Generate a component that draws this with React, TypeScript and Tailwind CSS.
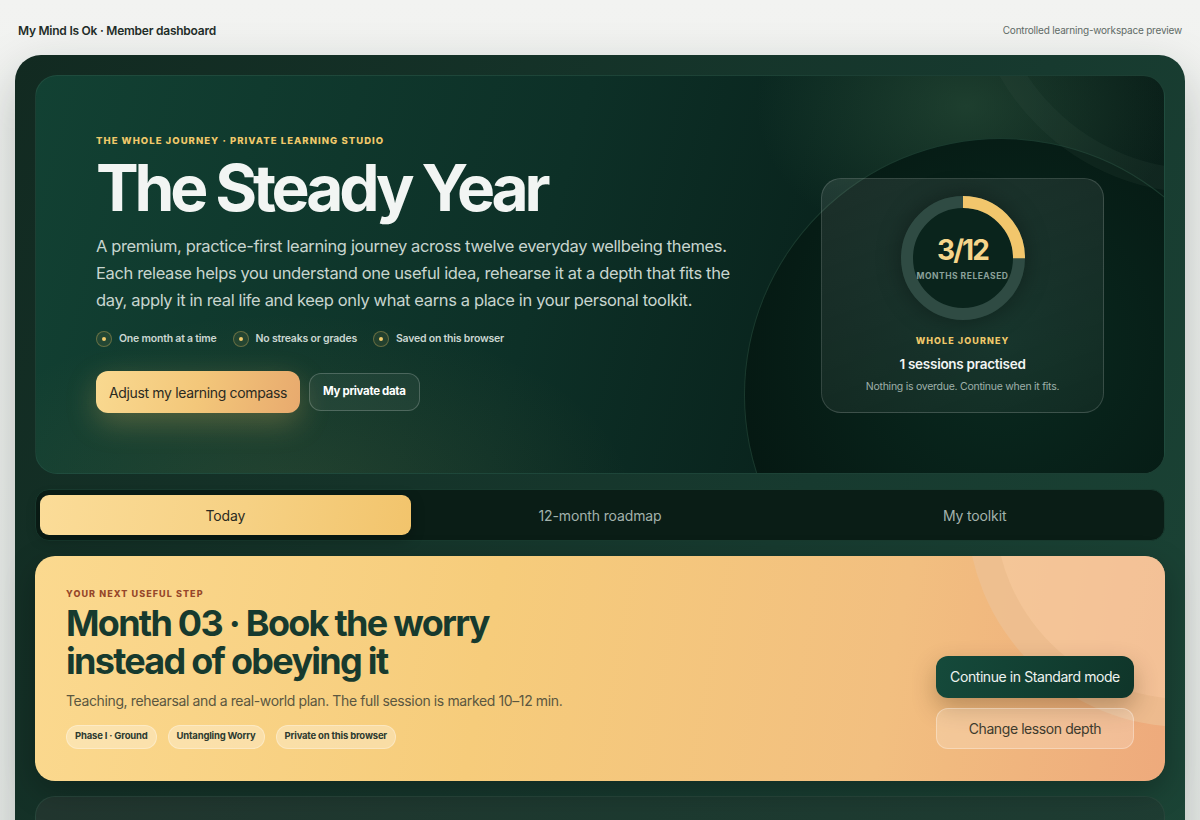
export default function App() {
  return (
    <div className="min-h-screen bg-[linear-gradient(180deg,#f2f3f1,#e7eae7)] px-[15px] font-['Inter',sans-serif] overflow-hidden">
      <header className="h-[55px] flex items-center justify-between px-[3px] pt-[6px]">
        <div className="text-[12px] font-semibold tracking-[-0.02em] text-[#1f2d28]">My Mind Is Ok · Member dashboard</div>
        <div className="text-[10px] tracking-[-0.02em] text-[#5f6b66]">Controlled learning-workspace preview</div>
      </header>

      <div className="rounded-[26px] bg-[linear-gradient(120deg,#122a21,#173a2f_60%,#1c4637)] p-5 flex flex-col gap-[15px] shadow-[0_20px_50px_rgba(20,40,30,0.25)]">
        {/* Hero */}
        <section className="relative overflow-hidden rounded-[22px] border border-[#2a5546]/60 bg-[linear-gradient(105deg,#124133,#0d3027_45%,#08201a_75%,#0a1e18)] px-[60px] pt-[59px] pb-[60px] flex items-end justify-between">
          <div className="absolute left-[-100px] bottom-[-220px] w-[700px] h-[380px] rounded-full bg-[radial-gradient(closest-side,rgba(190,160,80,0.12),transparent)]" />
          <div className="absolute left-[720px] top-[-120px] w-[420px] h-[300px] rounded-full bg-[radial-gradient(closest-side,rgba(70,120,85,0.35),transparent)]" />
          <div className="absolute left-[708px] top-[62px] w-[514px] h-[514px] rounded-full border border-[#2d5a48]/50 bg-[radial-gradient(circle_at_50%_40%,#0a2a20,#051812_70%)]" />
          <div className="absolute left-[933px] top-[-347px] w-[464px] h-[464px] rounded-full border-[24px] border-[#3a5a48]/15" />

          <div className="relative">
            <div className="text-[9.5px] leading-[12px] font-extrabold tracking-[0.11em] text-[#f0c96a]">
              THE WHOLE JOURNEY · PRIVATE LEARNING STUDIO
            </div>
            <h1 className="mt-[9px] text-[64px] leading-[1] font-bold tracking-[-0.065em] text-[#f2f5f3]">
              The Steady Year
            </h1>
            <p className="mt-[13px] w-[640px] text-[16.5px] leading-[27px] tracking-[-0.022em] text-[#c8d5cf]">
              A premium, practice-first learning journey across twelve everyday wellbeing themes. Each release helps you
              understand one useful idea, rehearse it at a depth that fits the day, apply it in real life and keep only
              what earns a place in your personal toolkit.
            </p>
            <div className="mt-[17px] flex items-center gap-4">
              {["One month at a time", "No streaks or grades", "Saved on this browser"].map((t) => (
                <div key={t} className="flex items-center gap-[7px]">
                  <span className="w-4 h-4 rounded-full border border-[#c9a95a]/40 bg-[#c9a95a]/10 flex items-center justify-center">
                    <span className="w-[4px] h-[4px] rounded-full bg-[#f0c96a]" />
                  </span>
                  <span className="text-[10.5px] font-semibold tracking-[-0.02em] text-[#cbd7d2]">{t}</span>
                </div>
              ))}
            </div>
            <div className="mt-[24px] flex items-center gap-[9px]">
              <button className="h-[42px] px-[13px] rounded-xl bg-[linear-gradient(100deg,#f9d990,#f3c77a_50%,#e8aa6e)] text-[14px] tracking-[-0.025em] text-[#2b2a1f] shadow-[0_10px_30px_rgba(240,190,100,0.28)]">
                Adjust my learning compass
              </button>
              <button className="h-[38px] px-[13px] rounded-xl bg-white/5 border border-white/20 text-[11.5px] font-bold tracking-[-0.03em] text-white">
                My private data
              </button>
            </div>
          </div>

          <div className="relative w-[283px] rounded-[20px] border border-white/15 bg-[linear-gradient(160deg,rgba(255,255,255,0.09),rgba(255,255,255,0.04))] pt-[17px] pb-[17px] flex flex-col items-center">
            <div className="relative w-[124px] h-[124px] rounded-full shadow-[0_0_24px_rgba(0,0,0,0.35)]">
              <svg width="124" height="124" viewBox="0 0 124 124" className="absolute inset-0">
                <circle cx="62" cy="62" r="56" fill="#0a241c" stroke="#2f4b43" strokeWidth="12" />
                <circle
                  cx="62"
                  cy="62"
                  r="56"
                  fill="none"
                  stroke="#f2c66c"
                  strokeWidth="12"
                  strokeDasharray={`${2 * Math.PI * 56 * 0.25} ${2 * Math.PI * 56}`}
                  transform="rotate(-90 62 62)"
                />
              </svg>
              <div className="absolute inset-0 flex flex-col items-center justify-center pt-[2px]">
                <div className="text-[28px] leading-[32px] font-bold tracking-[-0.07em] text-[#f6d58a]">3/12</div>
                <div className="mt-[4px] text-[8.5px] font-bold tracking-[0.06em] text-[#8aa19a] whitespace-nowrap">
                  MONTHS RELEASED
                </div>
              </div>
            </div>
            <div className="mt-[14px] text-[9px] font-extrabold tracking-[0.12em] text-[#f0c96a]">WHOLE JOURNEY</div>
            <div className="mt-[7px] text-[13.5px] font-semibold tracking-[-0.02em] text-[#f2f5f3]">1 sessions practised</div>
            <div className="mt-[5px] text-[10.5px] tracking-[-0.025em] text-[#9fb0aa]">Nothing is overdue. Continue when it fits.</div>
          </div>
        </section>

        {/* Tabs */}
        <nav className="grid grid-cols-3 gap-1 rounded-[14px] bg-[#0a1d16] border border-[#183a2e] px-[4px] py-[5px]">
          <button className="h-[40px] rounded-[9px] bg-[linear-gradient(100deg,#fbdc98,#f6d184_55%,#f2c46c)] text-[14px] tracking-[-0.01em] text-[#2b2a1f] shadow-[0_4px_14px_rgba(0,0,0,0.25)]">
            Today
          </button>
          <button className="h-[40px] text-[14px] tracking-[-0.01em] text-[#a3b2ac]">12-month roadmap</button>
          <button className="h-[40px] text-[14px] tracking-[-0.01em] text-[#a3b2ac]">My toolkit</button>
        </nav>

        {/* Next step */}
        <section className="relative overflow-hidden rounded-[20px] bg-[linear-gradient(100deg,#fbd98f,#f6cc7b_40%,#f2bf80_75%,#eeaa7c)] px-[31px] pt-[31px] pb-[32px] flex items-end justify-between shadow-[0_10px_30px_rgba(0,0,0,0.25)]">
          <div className="absolute right-[-238px] top-[-265px] w-[436px] h-[436px] rounded-full border-[28px] border-[#c99a5e]/15 bg-[#f6cfa8]/60" />
          <div className="relative">
            <div className="text-[9px] font-extrabold tracking-[0.12em] text-[#96472a]">YOUR NEXT USEFUL STEP</div>
            <h2 className="mt-[3px] max-w-[470px] text-[36px] leading-[38px] font-bold tracking-[-0.048em] text-[#173a2e]">
              Month 03 · Book the worry instead of obeying it
            </h2>
            <p className="mt-[10px] text-[14px] tracking-[-0.027em] text-[#5b5740]">
              Teaching, rehearsal and a real-world plan. The full session is marked 10–12 min.
            </p>
            <div className="mt-[14px] flex gap-[11px]">
              {["Phase I · Ground", "Untangling Worry", "Private on this browser"].map((t) => (
                <span
                  key={t}
                  className="h-[24px] px-[8px] flex items-center rounded-full bg-white/30 border border-white/30 text-[9.5px] font-bold tracking-[-0.02em] text-[#2d3a30]"
                >
                  {t}
                </span>
              ))}
            </div>
          </div>
          <div className="relative w-[198px] flex flex-col gap-[10px]">
            <button className="h-[42px] rounded-xl bg-[linear-gradient(110deg,#154a3b,#0f3529)] text-[14px] tracking-[-0.03em] text-[#eef3f0] shadow-[0_10px_24px_rgba(60,40,10,0.3)]">
              Continue in Standard mode
            </button>
            <button className="h-[41px] rounded-xl bg-white/20 border border-white/30 text-[14px] tracking-[-0.03em] text-[#3e3b2d]">
              Change lesson depth
            </button>
          </div>
        </section>

        {/* Next dark panel (cut off) */}
        <section className="h-[220px] rounded-[20px] border border-[#2c4b40]/70 bg-[linear-gradient(110deg,#22362f,#1d3a30_50%,#1f3d33)]" />
      </div>
    </div>
  )
}
